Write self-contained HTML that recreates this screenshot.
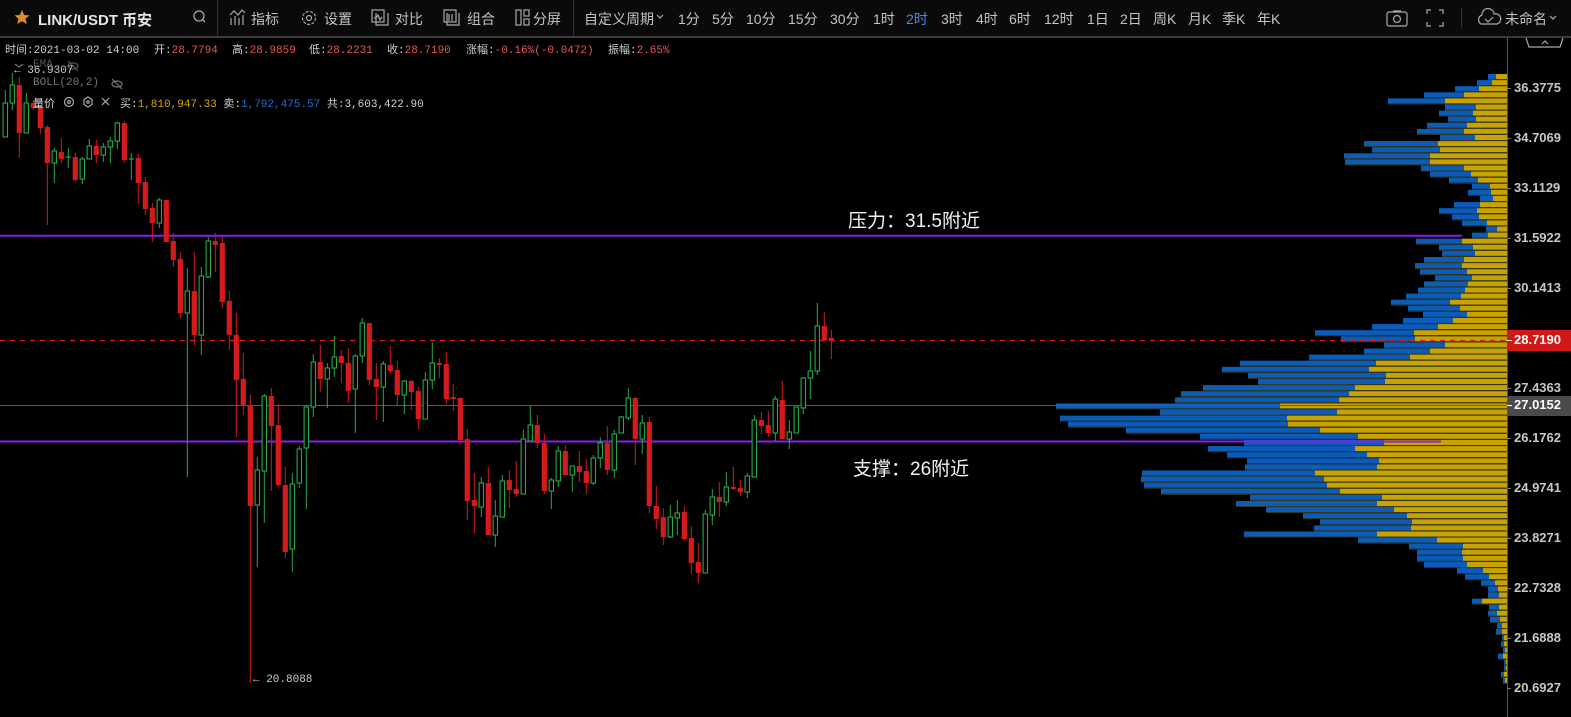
<!DOCTYPE html>
<html><head><meta charset="utf-8">
<style>
*{margin:0;padding:0;box-sizing:border-box}
body{width:1571px;height:717px;background:#000;overflow:hidden;position:relative;font-family:"Liberation Sans","Noto Sans CJK SC",sans-serif;color:#c8c8c8}
.t{position:absolute;white-space:nowrap}
.tb{font-size:14px;top:9px;color:#c4c4c4}
.m{font-family:"Liberation Mono","Noto Sans CJK SC",monospace;font-size:11px;color:#d0d0d0}
.r{color:#e8584f}
.pl{position:absolute;left:1514px;font-size:13px;color:#c8c8c8;font-weight:bold}
</style></head><body>
<svg id="chart" width="1571" height="717" style="position:absolute;left:0;top:0">
<g id="prof"></g>
<line x1="0" y1="405.5" x2="1507" y2="405.5" stroke="#5a5a5a" stroke-width="1"/>
<line x1="0" y1="340.5" x2="1507" y2="340.5" stroke="#d81e1e" stroke-width="1.2" stroke-dasharray="5,5"/>
<line x1="0" y1="235.8" x2="1462" y2="235.8" stroke="#8a1ee6" stroke-width="2"/>
<line x1="0" y1="441.5" x2="1441" y2="441.5" stroke="#8a1ee6" stroke-width="2"/>
<g id="cand"></g>
<line x1="1507.5" y1="38" x2="1507.5" y2="717" stroke="#555" stroke-width="1"/>
<g id="ticks" stroke="#777"></g>
<rect x="1508" y="330" width="63" height="21" fill="#d01818"/>
<rect x="1508" y="396" width="63" height="20" fill="#4a4a4a"/>
<line x1="1507" y1="340.5" x2="1512" y2="340.5" stroke="#fff"/>
<line x1="1507" y1="405.5" x2="1512" y2="405.5" stroke="#fff"/>
<rect x="0" y="0" width="1571" height="37" fill="#0a0a0a"/>
<rect x="0" y="36" width="1571" height="2" fill="#3a3a3a"/>
<line x1="217.5" y1="0" x2="217.5" y2="36" stroke="#333"/>
<line x1="573.5" y1="0" x2="573.5" y2="36" stroke="#333"/>
<line x1="1461.5" y1="8" x2="1461.5" y2="28" stroke="#333"/>
<polygon points="22,10 24.2,15 29.5,15.4 25.5,18.8 26.8,24 22,21.2 17.2,24 18.5,18.8 14.5,15.4 19.8,15" fill="#d8902a"/>
<circle cx="199" cy="16" r="5" fill="none" stroke="#aaa" stroke-width="1.3"/><line x1="202.5" y1="19.5" x2="205" y2="22" stroke="#aaa" stroke-width="1.3"/>
<g fill="none" stroke="#aaa" stroke-width="1.2">
<polyline points="230,15 234,11 238,15 242,10 245,13"/><line x1="231" y1="18" x2="231" y2="25"/><line x1="235" y1="16" x2="235" y2="25"/><line x1="239" y1="18" x2="239" y2="25"/><line x1="243" y1="15" x2="243" y2="25"/>
<circle cx="309" cy="18" r="2.5"/><circle cx="309" cy="18" r="6.5" stroke-dasharray="3,1.5"/>
<rect x="372" y="10" width="12" height="12"/><polyline points="376,13 376,25 388,25 388,13"/><polyline points="374,18 376,18 378,15 380,20 382,17"/>
<rect x="444" y="10" width="12" height="12"/><polyline points="447,13 447,25 459,25 459,13"/><line x1="449" y1="14" x2="449" y2="21"/><line x1="452" y1="14" x2="452" y2="21"/>
<rect x="516" y="10" width="5" height="15"/><rect x="524" y="10" width="5" height="6"/><rect x="524" y="19" width="5" height="6"/>
<polyline points="657,15 660,18 663,15"/>
<rect x="1387" y="12" width="20" height="14" rx="2"/><circle cx="1397" cy="19" r="3.5"/><line x1="1393" y1="11" x2="1401" y2="11"/>
<polyline points="1427,14 1427,10 1431,10"/><polyline points="1439,10 1443,10 1443,14"/><polyline points="1427,22 1427,26 1431,26"/><polyline points="1439,26 1443,26 1443,22"/>
<path d="M1481,24 A5,5 0 0 1 1482,15 A6,6 0 0 1 1494,14 A5,5 0 0 1 1497,24 Z"/><polyline points="1485,19 1488,22 1493,17"/>
<polyline points="1550,16 1553,19 1556,16"/>
<path d="M1526,38 L1529,47 L1560,47 L1563,38"/><polyline points="1542,44 1545,41 1548,44"/>
<circle cx="69" cy="102" r="4.5"/><circle cx="69" cy="102" r="1.5"/><polygon points="88,97 92,99.5 92,104.5 88,107 84,104.5 84,99.5"/><circle cx="88" cy="102" r="1.3"/><line x1="102" y1="98" x2="109" y2="105"/><line x1="109" y1="98" x2="102" y2="105"/>
<polyline points="15,64 19,67 23,64" stroke="#777"/>
<ellipse cx="73" cy="66" rx="5" ry="3" stroke="#555"/><line x1="68" y1="61" x2="78" y2="71" stroke="#555"/>
<ellipse cx="117" cy="84" rx="5" ry="3" stroke="#777"/><line x1="112" y1="79" x2="122" y2="89" stroke="#777"/>
</g>
</svg>
<div class="t" style="left:38px;top:9px;font-size:15px;font-weight:bold;color:#e6e6e6">LINK/USDT 币安</div>
<div class="t tb" style="left:251px">指标</div>
<div class="t tb" style="left:324px">设置</div>
<div class="t tb" style="left:395px">对比</div>
<div class="t tb" style="left:467px">组合</div>
<div class="t tb" style="left:533px">分屏</div>
<div class="t tb" style="left:584px">自定义周期</div>
<div class="t tb" style="left:678px">1分</div>
<div class="t tb" style="left:712px">5分</div>
<div class="t tb" style="left:746px">10分</div>
<div class="t tb" style="left:788px">15分</div>
<div class="t tb" style="left:830px">30分</div>
<div class="t tb" style="left:873px">1时</div>
<div class="t tb" style="left:906px;color:#3b8cf0">2时</div>
<div class="t tb" style="left:941px">3时</div>
<div class="t tb" style="left:976px">4时</div>
<div class="t tb" style="left:1009px">6时</div>
<div class="t tb" style="left:1044px">12时</div>
<div class="t tb" style="left:1087px">1日</div>
<div class="t tb" style="left:1120px">2日</div>
<div class="t tb" style="left:1153px">周K</div>
<div class="t tb" style="left:1188px">月K</div>
<div class="t tb" style="left:1222px">季K</div>
<div class="t tb" style="left:1257px">年K</div>
<div class="t tb" style="left:1505px">未命名</div>

<div class="t m" style="left:5px;top:41px">时间:2021-03-02 14:00</div>
<div class="t m" style="left:154px;top:41px">开:<span class="r">28.7794</span></div>
<div class="t m" style="left:232px;top:41px">高:<span class="r">28.9859</span></div>
<div class="t m" style="left:309px;top:41px">低:<span class="r">28.2231</span></div>
<div class="t m" style="left:387px;top:41px">收:<span class="r">28.7190</span></div>
<div class="t m" style="left:466px;top:41px">涨幅:<span class="r">-0.16%(-0.0472)</span></div>
<div class="t m" style="left:608px;top:41px">振幅:<span class="r">2.65%</span></div>
<div class="t m" style="left:33px;top:59px;color:#555">EMA</div>
<div class="t m" style="left:14px;top:65px;color:#ccc">← 36.9307</div>
<div class="t m" style="left:33px;top:77px;color:#777">BOLL(20,2)</div>
<div class="t m" style="left:33px;top:95px;color:#ddd">量价</div>
<div class="t m" style="left:120px;top:95px">买:<span style="color:#d2a800">1,810,947.33</span> 卖:<span style="color:#1e6fd0">1,792,475.57</span> 共:3,603,422.90</div>
<div class="t m" style="left:253px;top:674px;color:#ccc">← 20.8088</div>

<div class="t" style="left:848px;top:206px;font-size:19px;color:#f2f2f2">压力：31.5附近</div>
<div class="t" style="left:853px;top:454px;font-size:19px;color:#f2f2f2">支撑：26附近</div>

<div class="pl" style="top:80px">36.3775</div>
<div class="pl" style="top:130px">34.7069</div>
<div class="pl" style="top:180px">33.1129</div>
<div class="pl" style="top:230px">31.5922</div>
<div class="pl" style="top:280px">30.1413</div>
<div class="pl" style="top:332px;color:#fff">28.7190</div>
<div class="pl" style="top:380px">27.4363</div>
<div class="pl" style="top:397px;color:#fff">27.0152</div>
<div class="pl" style="top:430px">26.1762</div>
<div class="pl" style="top:480px">24.9741</div>
<div class="pl" style="top:530px">23.8271</div>
<div class="pl" style="top:580px">22.7328</div>
<div class="pl" style="top:630px">21.6888</div>
<div class="pl" style="top:680px">20.6927</div>
<script>
var NS="http://www.w3.org/2000/svg";
function el(p,t,a){var e=document.createElementNS(NS,t);for(var k in a)e.setAttribute(k,a[k]);p.appendChild(e);return e;}
var P=[[1074,1098],[1041,1086],[975,1047],[882,1002],[774,945],[945,1038],[927,1029],[954,1038],[891,1011],[861,1002],[930,1035],[702,924],[726,930],[642,900],[645,900],[873,1002],[900,1023],[957,1044],[1026,1080],[1014,1083],[1050,1089],[972,1050],[927,1041],[966,1047],[996,1071],[1068,1101],[1026,1074],[858,996],[927,1029],[936,1035],[882,1002],[855,996],[870,1011],[915,1026],[882,1014],[864,1005],[828,993],[783,960],[834,990],[879,1011],[819,969],[726,924]];
var prof=document.getElementById('prof');
var rows=[];
P.forEach(function(a){rows.push([1130+a[0]/3,1130+a[1]/3]);});
var Q=[[1315,1414],[1341,1415],[1384,1445],[1364,1430],[1309,1410],[1240,1376],[1222,1369],[1248,1386],[1258,1385],[1203,1355],[1181,1349],[1175,1339],[1056,1280],[1160,1337],[1060,1287],[1068,1288],[1126,1320],[1200,1358],[1244,1384],[1208,1355],[1227,1367],[1247,1379],[1245,1377],[1142,1315],[1141,1324],[1144,1327],[1161,1340],[1250,1382],[1236,1377],[1266,1394],[1303,1407],[1320,1412],[1314,1411],[1244,1377],[1358,1437],[1409,1463],[1417,1462],[1417,1463],[1424,1467],[1457,1483],[1465,1489],[1481,1495],[1488,1498],[1488,1499],[1472,1482],[1489,1499],[1488,1497],[1490,1500],[1497,1502],[1496,1502],[1502,1504],[1501,1504],[1503,1505],[1498,1503],[1504,1506],[1504,1506],[1501,1504],[1503,1505]];
rows=rows.concat(Q);
rows.forEach(function(r,i){var y=74+i*6.1;
el(prof,'rect',{x:r[0],y:y,width:r[1]-r[0],height:5,fill:'#0b5cb8'});
el(prof,'rect',{x:r[1],y:y,width:1507-r[1],height:5,fill:'#c7a203'});
el(prof,'rect',{x:r[0],y:y+5,width:1507-r[0],height:1,fill:'#3a3a1a'});});
var C=[[103,137,90,137,'g'],[85,103,73,110,'g'],[85,133,77,158,'r'],[103,133,93,133,'g'],[103,108,100,110,'r'],[108,128,105,134,'r'],[127,163,125,225,'r'],[151,163,148,183,'g'],[152,159,138,163,'r'],[157,157,148,168,'g'],[157,180,153,182,'r'],[159,179,157,184,'g'],[146,159,139,159,'g'],[146,155,140,163,'r'],[147,155,143,162,'g'],[141,147,137,163,'g'],[123,141,122,149,'g'],[123,160,121,163,'r'],[159,159,153,180,'g'],[158,183,154,204,'r'],[182,209,177,215,'r'],[208,223,203,242,'r'],[200,223,198,228,'g'],[200,242,200,242,'r'],[241,260,233,267,'r'],[259,313,252,318,'r'],[291,313,268,477,'g'],[291,335,252,345,'r'],[276,335,267,355,'g'],[241,277,237,278,'g'],[241,245,233,272,'r'],[243,302,237,308,'r'],[301,335,291,350,'r'],[335,380,313,437,'r'],[379,406,353,415,'r'],
[405,506,395,683,'r'],[470,505,457,567,'g'],[396,471,394,523,'g'],[396,426,388,491,'r'],[425,485,404,487,'r'],[485,552,467,558,'r'],[484,549,473,572,'g'],[449,483,446,488,'g'],[407,448,406,509,'g'],[362,407,354,417,'g'],[362,379,345,392,'r'],[368,379,363,408,'g'],[357,368,336,377,'g'],[356,363,350,383,'r'],[363,391,348,403,'r'],[356,389,354,433,'g'],[323,356,318,363,'g'],[323,380,323,385,'r'],[379,387,363,420,'r'],[364,387,361,422,'g'],[365,371,346,373,'r'],[370,395,361,405,'r'],[381,395,381,414,'g'],[381,392,380,410,'r'],[391,419,387,429,'r'],[380,419,372,419,'g'],[363,380,342,389,'g'],[363,365,358,378,'r'],[364,399,352,404,'r'],[397,399,384,411,'r'],[398,440,398,444,'r'],[439,501,429,520,'r'],[500,506,473,533,'r'],
[483,507,477,517,'g'],[483,535,467,535,'r'],[516,535,500,547,'g'],[481,517,475,517,'g'],[480,490,470,508,'r'],[489,494,461,497,'r'],[439,494,430,494,'g'],[425,441,406,441,'g'],[425,443,415,448,'r'],[443,491,434,494,'r'],[480,491,478,509,'g'],[451,481,446,487,'g'],[451,475,445,475,'r'],[466,475,466,492,'g'],[466,472,451,482,'r'],[471,483,459,494,'r'],[458,483,455,485,'g'],[443,458,437,468,'g'],[443,470,426,475,'r'],[434,470,430,478,'g'],[417,433,416,433,'g'],[398,418,388,420,'g'],[398,439,397,465,'r'],[423,439,415,454,'g'],[422,506,417,513,'r'],[506,519,486,529,'r'],
[517,537,508,545,'r'],[517,537,505,538,'g'],[513,518,500,535,'g'],[512,539,506,541,'r'],[538,563,526,574,'r'],[562,573,543,583,'r'],[514,573,510,573,'g'],[497,515,489,525,'g'],[497,502,482,517,'r'],[487,502,472,506,'g'],[487,489,467,490,'r'],[488,492,480,496,'r'],[476,492,473,498,'g'],[420,477,415,477,'g'],[420,426,412,434,'r'],[425,433,411,437,'r'],[399,433,396,441,'g'],[400,439,381,439,'r'],[432,439,420,449,'g'],[407,433,407,433,'g'],[378,408,377,414,'g'],[371,378,351,399,'g'],[326,371,303,375,'g'],[326,340,312,340,'r'],[338,341,330,359,'r']];
var cg=document.getElementById('cand');
C.forEach(function(c,i){var x=5.3+i*7;var col=c[4]=='g'?'#29a84a':'#d41a1a';
el(cg,'line',{x1:x,y1:c[2],x2:x,y2:c[3],stroke:col,'stroke-width':1});
var h=Math.max(c[1]-c[0],1);
if(c[4]=='g'){if(h<=1)el(cg,'line',{x1:x-2.5,y1:c[0],x2:x+2.5,y2:c[0],stroke:col,'stroke-width':1.2});
else el(cg,'rect',{x:x-2.2,y:c[0],width:4.4,height:h,fill:'#000',stroke:col,'stroke-width':1.1});}
else el(cg,'rect',{x:x-2.6,y:c[0],width:5.2,height:Math.max(h,2),fill:col});});
var tk=document.getElementById('ticks');
[88,138,188,238,288,388,438,488,538,588,638,688].forEach(function(y){el(tk,'line',{x1:1507,y1:y+.5,x2:1511,y2:y+.5});});
</script>
</body></html>
